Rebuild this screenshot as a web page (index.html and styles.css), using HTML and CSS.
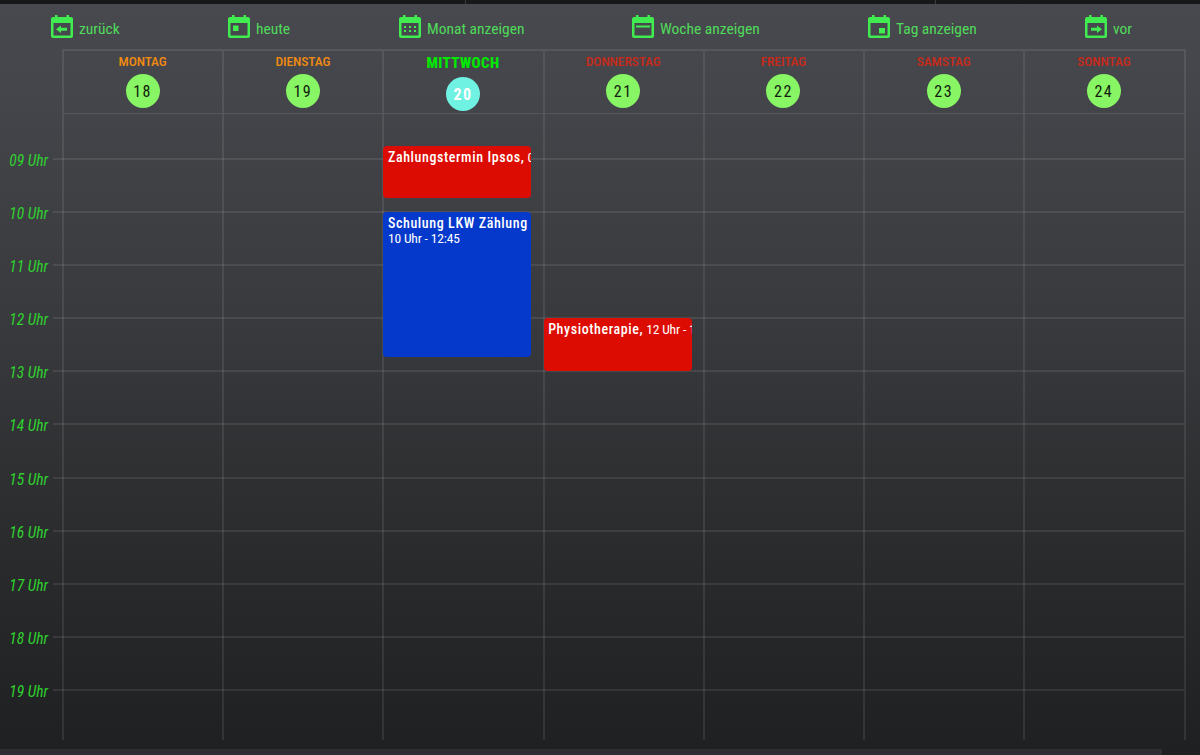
FILE: index.html
```html
<!DOCTYPE html>
<html lang="de">
<head>
<meta charset="utf-8">
<title>Kalender</title>
<link rel="stylesheet" href="styles.css">
</head>
<body>
<svg class="defs" width="0" height="0" aria-hidden="true">
  <defs>
    <g id="cal">
      <path d="M4 0h2.500v3H4zM15.500 0H18v3h-2.500z"/>
      <path fill-rule="evenodd" d="M2 2h18a2 2 0 0 1 2 2v17a2 2 0 0 1-2 2H2a2 2 0 0 1-2-2V4a2 2 0 0 1 2-2zM2.500 8v12.500h17V8z"/>
    </g>
  </defs>
</svg>
<div class="topbar"></div>
<main class="page">
  <nav class="nav">
    <a class="nav-item nav-back"><svg class="ico" viewBox="0 0 22 23"><use href="#cal"/><path d="M5 14.300 10 10.500v2.300h6v3h-6v2.300z"/></svg><span>zurück</span></a>
    <a class="nav-item nav-today"><svg class="ico" viewBox="0 0 22 23"><use href="#cal"/><path d="M5 10.500h5.500V16H5z"/></svg><span>heute</span></a>
    <a class="nav-item nav-month"><svg class="ico" viewBox="0 0 22 23"><use href="#cal"/><path d="M5 11h2v2H5zM10 11h2v2h-2zM15 11h2v2h-2zM5 15h2v2H5zM10 15h2v2h-2zM15 15h2v2h-2z"/></svg><span>Monat anzeigen</span></a>
    <a class="nav-item nav-week"><svg class="ico" viewBox="0 0 22 23"><use href="#cal"/><path d="M4 10.500h14v2H4z"/></svg><span>Woche anzeigen</span></a>
    <a class="nav-item nav-day"><svg class="ico" viewBox="0 0 22 23"><use href="#cal"/><path d="M11 13h6v5.500h-6z"/></svg><span>Tag anzeigen</span></a>
    <a class="nav-item nav-next"><svg class="ico" viewBox="0 0 22 23"><use href="#cal"/><path d="M17 14.300 12 10.500v2.300H6v3h6v2.300z"/></svg><span>vor</span></a>
  </nav>

  <section class="calendar">
    <header class="head">
      <div class="head-day"><span class="name work">MONTAG</span><span class="num">18</span></div>
      <div class="head-day"><span class="name work">DIENSTAG</span><span class="num">19</span></div>
      <div class="head-day head-today"><span class="name today">MITTWOCH</span><span class="num num-today">20</span></div>
      <div class="head-day"><span class="name off">DONNERSTAG</span><span class="num">21</span></div>
      <div class="head-day"><span class="name off">FREITAG</span><span class="num">22</span></div>
      <div class="head-day"><span class="name off">SAMSTAG</span><span class="num">23</span></div>
      <div class="head-day"><span class="name off">SONNTAG</span><span class="num">24</span></div>
    </header>
    <div class="body">
      <div class="hours">
        <div class="lead"></div>
        <div class="hour"><span class="label">09 Uhr</span><span class="rule"></span></div>
        <div class="hour"><span class="label">10 Uhr</span><span class="rule"></span></div>
        <div class="hour"><span class="label">11 Uhr</span><span class="rule"></span></div>
        <div class="hour"><span class="label">12 Uhr</span><span class="rule"></span></div>
        <div class="hour"><span class="label">13 Uhr</span><span class="rule"></span></div>
        <div class="hour"><span class="label">14 Uhr</span><span class="rule"></span></div>
        <div class="hour"><span class="label">15 Uhr</span><span class="rule"></span></div>
        <div class="hour"><span class="label">16 Uhr</span><span class="rule"></span></div>
        <div class="hour"><span class="label">17 Uhr</span><span class="rule"></span></div>
        <div class="hour"><span class="label">18 Uhr</span><span class="rule"></span></div>
        <div class="hour"><span class="label">19 Uhr</span><span class="rule"></span></div>
      </div>
      <div class="days">
        <div class="day"></div>
        <div class="day"></div>
        <div class="day">
          <div class="event red ev-pay"><b>Zahlungstermin Ipsos,</b> 09 Uhr - 10 Uhr</div>
          <div class="event blue ev-train"><b>Schulung LKW Zählung</b><br>10 Uhr - 12:45</div>
        </div>
        <div class="day">
          <div class="event red ev-physio"><b>Physiotherapie,</b> 12 Uhr - 13 Uhr</div>
        </div>
        <div class="day"></div>
        <div class="day"></div>
        <div class="day"></div>
      </div>
    </div>
  </section>
  <div class="scrollbar"></div>
</main>
</body>
</html>
```
FILE: styles.css
```css
* { box-sizing: border-box; }
html, body { margin: 0; height: 755px; overflow: hidden; }
body {
  display: flex;
  flex-direction: column;
  font-family: Roboto, "Liberation Sans", sans-serif;
  font-stretch: 75%;
  background: #1f2021;
}
.defs { position: absolute; }
.topbar {
  height: 4px;
  flex: none;
  background: linear-gradient(90deg, #17181a 465px, #3a3b3e 465px, #3a3b3e 466px, #17181a 466px, #17181a 935px, #3a3b3e 935px, #3a3b3e 936px, #17181a 936px);
}
.page {
  flex: 1;
  display: flex;
  flex-direction: column;
  background: linear-gradient(180deg, #48494e 0, #45464b 80px, #38393c 330px, #2b2c2e 530px, #1f2021 751px);
}
.nav {
  height: 45px;
  flex: none;
  position: relative;
  color: #4fdc5a;
  font-size: 15.5px;
}
.nav-item {
  position: absolute;
  top: 11px;
  display: flex;
  align-items: center;
  gap: 6px;
  height: 23px;
  white-space: nowrap;
}
.nav-item span { position: relative; top: 2px; }
.nav-back { left: 51px; }
.nav-today { left: 228px; }
.nav-month { left: 399px; }
.nav-week { left: 632px; }
.nav-day { left: 868px; }
.nav-next { left: 1085px; }
.ico { width: 22px; height: 23px; fill: #40ec50; flex: none; }
.calendar {
  height: 691px;
  flex: none;
  margin-left: 62px;
  width: 1123.5px;
  display: flex;
  flex-direction: column;
}
.head {
  height: 65px;
  flex: none;
  display: grid;
  grid-template-columns: repeat(7, 1fr);
  border-top: 2px solid rgba(255, 255, 255, 0.085);
  border-bottom: 1px solid rgba(255, 255, 255, 0.1);
  border-right: 2px solid rgba(255, 255, 255, 0.085);
}
.head-day {
  display: flex;
  flex-direction: column;
  align-items: center;
  padding-top: 2px;
  padding-right: 1px;
  gap: 5px;
  border-left: 2px solid rgba(255, 255, 255, 0.085);
}
.name { font-size: 13.5px; font-weight: 500; letter-spacing: -0.1px; line-height: 16px; }
.work { color: #f08a10; }
.off { color: #c82a1a; }
.today { color: #00e800; font-weight: 800; font-size: 15px; line-height: 18px; letter-spacing: 0.4px; margin-top: 1px; margin-bottom: 1px; }
.num {
  width: 34px;
  height: 34px;
  border-radius: 50%;
  background: #88f565;
  color: #10200c;
  display: flex;
  align-items: center;
  justify-content: center;
  font-size: 16px;
  letter-spacing: 1.5px;
}
.num-today {
  margin-top: -1px;
  background: #70f2e2;
  color: #fff;
  font-weight: 700;
}
.body { position: relative; flex: 1; min-height: 0; }
.hours { margin-left: -62px; height: 100%; display: flex; flex-direction: column; }
.lead { height: 44px; flex: none; }
.hour {
  height: 53.1px;
  flex: none;
  display: flex;
  align-items: flex-start;
}
.label {
  width: 53px;
  flex: none;
  padding-right: 5px;
  text-align: right;
  color: #2fd22f;
  font-style: italic;
  font-size: 15.5px;
  line-height: 16px;
  margin-top: -5px;
}
.rule { flex: 1; margin-right: 2px; height: 2px; background: rgba(255, 255, 255, 0.085); }
.days {
  position: absolute;
  inset: 0;
  display: grid;
  grid-template-columns: repeat(7, 1fr);
  border-right: 2px solid rgba(255, 255, 255, 0.085);
}
.day { position: relative; border-left: 2px solid rgba(255, 255, 255, 0.085); }
.event {
  position: absolute;
  left: -1px;
  width: 148px;
  border-radius: 4px;
  padding: 4px 4px 0 4.5px;
  color: #fff;
  font-size: 13.5px;
  letter-spacing: -0.15px;
  line-height: 15px;
  overflow: hidden;
  white-space: nowrap;
}
.event b { font-size: 14px; font-weight: 500; letter-spacing: 0.6px; }
.red { background: #dc0c02; }
.blue { background: #0539cc; }
.ev-pay { top: 32px; height: 52px; }
.ev-train { top: 98px; height: 145px; }
.ev-physio { top: 204px; height: 53px; }
.scrollbar {
  position: absolute;
  left: 0;
  top: 749px;
  width: 1162px;
  height: 6px;
  background: #2e2f32;
}
```
